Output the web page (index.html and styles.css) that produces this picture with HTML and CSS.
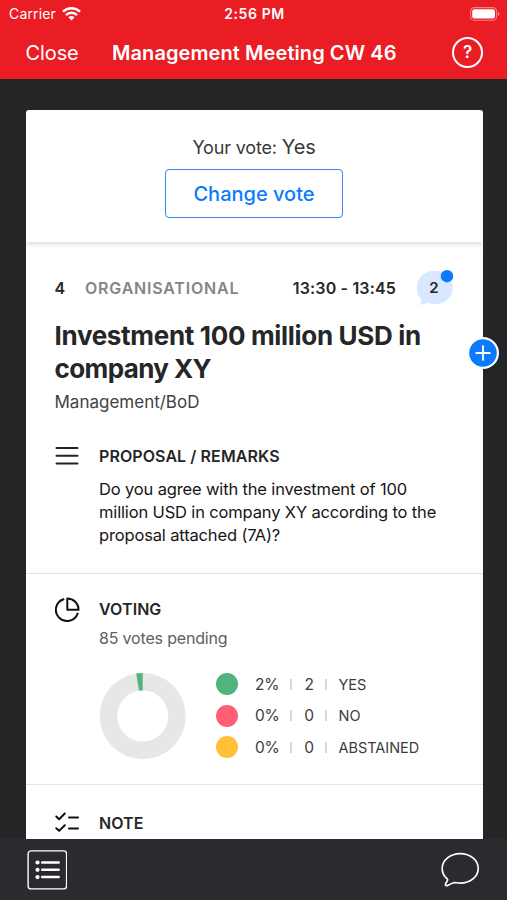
FILE: index.html
```html
<!DOCTYPE html>
<html lang="en">
<head>
<meta charset="utf-8">
<meta name="viewport" content="width=device-width, initial-scale=1">
<title>Management Meeting CW 46</title>
<link rel="stylesheet" href="styles.css">
</head>
<body>
<div class="app">
  <header class="top">
    <div class="status">
      <div class="carrier"><span class="carrier-name">Carrier</span>
        <svg width="19" height="14" viewBox="0 0 19 14" fill="none" stroke="#fff" stroke-width="2.500"><path d="M1 4.700a12.200 12.200 0 0 1 17 0"/><path d="M4 8.100a7.900 7.900 0 0 1 11 0"/><path d="M9.500 13.400 6.400 10.300a4.600 4.600 0 0 1 6.200 0z" fill="#fff" stroke="none"/></svg>
      </div>
      <span class="clock">2:56 PM</span>
      <svg class="battery" width="30" height="14" viewBox="0 0 30 14"><rect x=".6" y=".6" width="26" height="12.600" rx="3.800" fill="none" stroke="#fff" stroke-opacity=".45" stroke-width="1.100"/><rect x="2.200" y="2.200" width="22.800" height="9.400" rx="2.300" fill="#fff"/><path d="M28 4.700q1.500.7 1.500 2.200T28 9.100z" fill="#fff" fill-opacity=".5"/></svg>
    </div>
    <nav class="nav">
      <span class="close">Close</span>
      <h1 class="title">Management Meeting CW 46</h1>
      <span class="help">?</span>
    </nav>
  </header>

  <main class="stage">
    <article class="card">
      <section class="vote">
        <p class="your-vote">Your vote: <span class="answer">Yes</span></p>
        <button class="change">Change vote</button>
      </section>

      <section class="item">
        <div class="meta">
          <span class="number">4</span>
          <span class="category">ORGANISATIONAL</span>
          <span class="time">13:30 - 13:45</span>
          <div class="comments">
            <svg width="38" height="38" viewBox="0 0 38 38"><path d="M3.500 35.700q2.800-3.200 1.400-5.800C2.400 27.200.8 23.400.8 18.900.8 9.100 8.500 1.800 18.900 1.800s17.900 7 17.900 16.500-7.500 17-17.900 17c-3.300 0-5.400-.6-7.300-1.700-2.100 1.300-5 2.100-8.100 2.100z" fill="#d9e8fe"/><circle cx="31" cy="7.200" r="6.200" fill="#0a7aff"/></svg>
            <span class="count">2</span>
          </div>
        </div>
        <h2 class="heading">Investment 100 million USD in<br><span class="heading-end">company XY</span></h2>
        <p class="group">Management/BoD</p>
      </section>

      <section class="row proposal">
        <svg class="icon" width="26" height="26" viewBox="0 0 26 26" fill="none" stroke="#222" stroke-width="2" stroke-linecap="round"><path d="M1.500 4h21M1.500 11.800h21M1.500 19.600h21"/></svg>
        <div>
          <h3 class="label">PROPOSAL / REMARKS</h3>
          <p class="question">Do you agree with the investment of 100<br>million USD in company XY according to the<br>proposal attached (7A)?</p>
        </div>
      </section>

      <section class="row voting">
        <svg class="icon" width="26" height="26" viewBox="0 0 26 26" fill="none" stroke="#111" stroke-width="2" stroke-linecap="round" stroke-linejoin="round"><path d="M8.500 2.200A11.200 11.200 0 1 0 22.600 16.600"/><path d="M12.300 1.500v11.300h11.300A11.300 11.300 0 0 0 12.300 1.500z"/></svg>
        <div>
          <h3 class="label">VOTING</h3>
          <p class="pending">85 votes pending</p>
          <div class="result">
            <svg class="donut" width="88" height="88" viewBox="0 0 88 88"><circle cx="43.700" cy="44" r="34.250" fill="none" stroke="#e7e7e7" stroke-width="17.500"/><path d="M43.700 1v17.500h-3.700L37.200 1.500z" fill="#50b47c"/></svg>
            <div class="legend">
              <div class="entry"><i class="dot yes"></i><span>2%</span><i class="bar"></i><span class="votes">2</span><i class="bar"></i><span class="name">YES</span></div>
              <div class="entry"><i class="dot no"></i><span>0%</span><i class="bar"></i><span class="votes">0</span><i class="bar"></i><span class="name">NO</span></div>
              <div class="entry"><i class="dot abstained"></i><span>0%</span><i class="bar"></i><span class="votes">0</span><i class="bar"></i><span class="name">ABSTAINED</span></div>
            </div>
          </div>
        </div>
      </section>

      <section class="row note">
        <svg class="icon" width="26" height="26" viewBox="0 0 26 26" fill="none" stroke="#111" stroke-width="2" stroke-linecap="round" stroke-linejoin="round"><path d="M1.300 5.500l2.800 2.700 5.700-5.700M1.300 17.200l2.800 2.700 5.700-5.700M14 6.500h9M14 17.600h9"/></svg>
        <h3 class="label">NOTE</h3>
      </section>
      <button class="add" aria-label="Add"><svg width="32" height="32" viewBox="0 0 32 32"><circle cx="16" cy="16" r="14.900" fill="#0a7aff" stroke="#fff" stroke-width="2.200"/><path d="M9.300 16h13.400M16 9.300v13.400" stroke="#fff" stroke-width="2.100" stroke-linecap="round"/></svg></button>
    </article>
  </main>

  <footer class="bottom">
    <svg width="40" height="40" viewBox="0 0 40 40" fill="none" stroke="#fff"><rect x="1.100" y=".9" width="38.500" height="38" rx="3" stroke-width="1.400"/><path d="M15.200 12.500h16.500M15.200 19.800h16.500M15.200 27.100h16.500" stroke-width="2.500" stroke-linecap="round"/><g fill="#fff" stroke="none"><circle cx="10.500" cy="12.500" r="2.100"/><circle cx="10.500" cy="19.800" r="2.100"/><circle cx="10.500" cy="27.100" r="2.100"/></g></svg>
    <svg width="40" height="36" viewBox="0 0 40 36" fill="none" stroke="#fff" stroke-width="1.700" stroke-linejoin="round"><path d="M20.300 1.600C10.300 1.600 2.200 8.300 2.200 16.400c0 4.400 1.900 7.800 5 10.400.9.800.7 1.300-.1 2.500-.7 1.100-1.700 2.300-1.700 3.300 0 1.200 1.300 1.300 2.400.8 2.500-1 4.600-2.900 7-2.900 1.700.2 3.600.6 5.500.6 9.900 0 17.900-6.500 17.900-14.700S30.200 1.600 20.300 1.600z"/></svg>
  </footer>
</div>
</body>
</html>
```
FILE: styles.css
```css
* { box-sizing: border-box; }
body, h1, h2, h3, p { margin: 0; }
body { font-family: Inter, "Liberation Sans", sans-serif; color: #252628; }
svg { display: block; flex: none; }
button { font: inherit; cursor: pointer; }
.app { height: 900px; display: flex; flex-direction: column; overflow: hidden; background: #242527; }

.top { height: 79px; background: #ea1c24; color: #fff; }
.status { height: 27px; display: grid; grid-template-columns: 1fr auto 1fr; align-items: center; padding: 0 7px 0 9px; }
.carrier { display: flex; align-items: center; gap: 6px; }
.carrier-name { font-size: 14px; letter-spacing: .15px; }
.clock { font-size: 14px; font-weight: 600; letter-spacing: .6px; }
.battery { justify-self: end; }
.nav { height: 51px; display: flex; align-items: center; padding: 0 24px 0 25.500px; }
.close { width: 86.500px; font-size: 20px; letter-spacing: -.1px; }
.title { flex: 1; font-size: 20px; line-height: 26px; font-weight: 600; letter-spacing: .08px; white-space: nowrap; }
.help { width: 31px; height: 31px; border: 2px solid #fff; border-radius: 50%; text-align: center; font-size: 17px; line-height: 27px; font-weight: 600; }

.stage { height: 760px; padding: 31px 24.500px 0 25.500px; }
.card { position: relative; height: 729px; background: #fff; border-radius: 3px 3px 0 0; }
.vote { height: 132px; display: flex; flex-direction: column; align-items: center; padding: 24px 0; box-shadow: 0 2px 5px rgba(0,0,0,.15); clip-path: inset(0 0 -8px 0); }
.your-vote { height: 35px; font-size: 18px; line-height: 27px; letter-spacing: -.16px; color: #38393b; }
.answer { font-size: 20px; }
.change { width: 178px; height: 49px; padding: 0; border: 1.500px solid #2f88f5; border-radius: 4px; background: #fff; color: #0a7aff; font-size: 20px; font-weight: 500; }

.item { height: 200px; padding: 26px 29px 0; }
.meta { height: 40px; display: flex; align-items: center; font-size: 16px; font-weight: 600; }
.number { width: 30.500px; }
.category { color: #858585; letter-spacing: .8px; }
.time { margin-left: auto; letter-spacing: .17px; }
.comments { position: relative; margin-left: 19.500px; }
.count { position: absolute; inset: 0 1px 0 0; text-align: center; font-size: 15px; line-height: 38px; }
.heading { margin-top: 12px; font-size: 26px; line-height: 32.500px; font-weight: 650; letter-spacing: -.32px; white-space: nowrap; }
.heading-end { letter-spacing: -.6px; }
.group { margin-top: 5px; font-size: 17px; line-height: 24px; color: #424242; }

.row { display: flex; padding: 0 29px; }
.row + .row { border-top: 1px solid #d6e6f8; }
.icon { width: 26px; margin-right: 18.500px; }
.label { font-size: 16px; line-height: 24px; font-weight: 600; letter-spacing: .08px; white-space: nowrap; }
.proposal { height: 131px; padding-top: 2px; }
.question { margin-top: 9.500px; font-size: 16.500px; line-height: 23.200px; letter-spacing: -.15px; color: #161616; white-space: nowrap; }
.voting { height: 211px; padding-top: 23px; }
.pending { margin-top: 5px; font-size: 16px; line-height: 24px; letter-spacing: -.18px; color: #606060; }
.result { display: flex; align-items: center; margin-top: 18.500px; }
.legend { margin-left: 29px; }
.entry { height: 31.500px; display: flex; align-items: center; font-size: 15.500px; color: #3b3b3b; }
.entry span { width: 29px; letter-spacing: -.3px; }
.entry .votes { width: 20px; text-align: center; }
.entry .name { width: auto; font-size: 14.500px; letter-spacing: -.02px; }
.dot { width: 22px; height: 22px; border-radius: 50%; margin-right: 17px; }
.yes { background: #50b47c; }
.no { background: #ff5f74; }
.abstained { background: #ffbf36; }
.bar { width: 1.500px; height: 11px; margin: 0 7.500px 0 6px; background: #d7d7d7; }
.bar + .name { margin-left: 4.500px; }
.note { height: 55px; padding-top: 26px; }
.add { position: absolute; right: -16px; top: 227px; padding: 0; border: 0; background: none; }
.bottom { height: 61px; display: flex; align-items: center; justify-content: space-between; padding: 0 27px; background: #2a2b2f; }
```
